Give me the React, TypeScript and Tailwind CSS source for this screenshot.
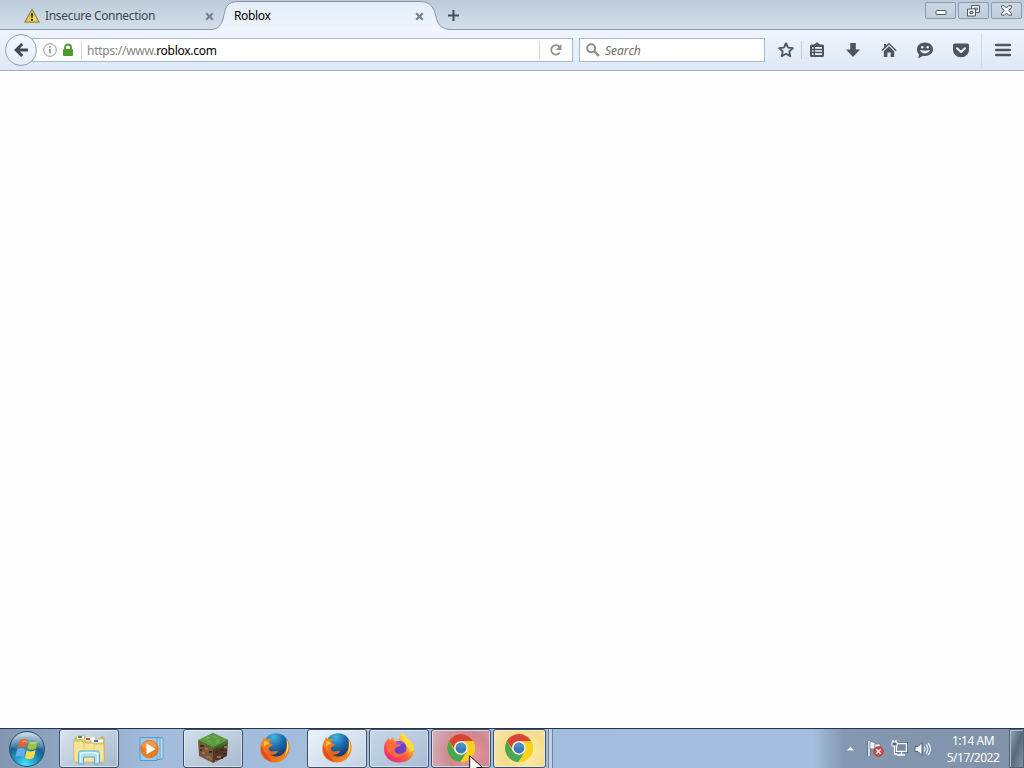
import type { ReactNode } from 'react'
import clsx from 'clsx'

function WarningIcon() {
  return (
    <svg width="16" height="16" viewBox="0 0 16 16" className="shrink-0">
      <path d="M8 1.2 15.2 14.3H.8z" fill="#e9c93a" stroke="#8b8450" strokeWidth="1.1" strokeLinejoin="round" />
      <path d="M8 3.5 12.9 12.8H8z" fill="#f6e27a" opacity=".6" />
      <path d="M7 5.2h2l-.4 4.8H7.4z" fill="#222" />
      <circle cx="8" cy="11.8" r="1.1" fill="#222" />
    </svg>
  )
}

function CloseIcon() {
  return (
    <svg width="9" height="9" viewBox="0 0 9 9" className="shrink-0">
      <path d="M1.2 1.2 7.8 7.8M7.8 1.2 1.2 7.8" stroke="#74808b" strokeWidth="2.2" />
    </svg>
  )
}

function CaptionButton({ children }: { children: ReactNode }) {
  return (
    <button className="flex h-[17px] w-[31px] items-center justify-center rounded-[2px] border border-[#8b9bac] bg-linear-to-b from-[#cad7e3] to-[#bfcedc]">
      {children}
    </button>
  )
}

function TabStrip() {
  return (
    <div className="flex h-[30px] bg-linear-to-b from-[#bdcbd9] to-[#d4e0ec] shadow-[inset_0_-1px_0_#8a9bb0]">
      <div className="flex h-8 w-[211px] shrink-0 items-center pl-6 text-[#3d454e]">
        <WarningIcon />
        <span className="ml-[5px] w-[160px] shrink-0 tracking-[-0.32px]">Insecure Connection</span>
        <CloseIcon />
      </div>
      <div className="relative flex h-[30px] w-[240px] shrink-0 items-center">
        <svg width="242" height="30" viewBox="0 0 242 30" className="absolute top-0 left-0">
          <defs>
            <linearGradient id="tab" x1="0" y1="0" x2="0" y2="1">
              <stop offset="0" stopColor="#e3edf9" />
              <stop offset="1" stopColor="#f0f5fe" />
            </linearGradient>
          </defs>
          <path
            d="M0 29.5C8 29 10.5 25 12.500 17C14.500 8 15.500 1.500 27 1.500H209C220 1.500 223 8 225 17C227 25 230 29 240 29.500V30H0z"
            fill="url(#tab)"
          />
          <path
            d="M0 29.500C8 29 10.500 25 12.500 17C14.500 8 15.500 1.500 27 1.500H209C220 1.500 223 8 225 17C227 25 230 29 240 29.500h2"
            fill="none"
            stroke="#8796a9"
          />
        </svg>
        <span className="relative ml-[23px] w-[181px] pt-[2px] tracking-[-0.35px] text-black">Roblox</span>
        <span className="relative pt-[2px]"><CloseIcon /></span>
      </div>
      <svg width="11" height="11" viewBox="0 0 11 11" className="mt-[10px] -ml-[3px]">
        <path d="M5.5 0v11M0 5.5h11" stroke="#424c57" strokeWidth="2" />
      </svg>
      <div className="ml-auto flex gap-[2px] pt-[2px] pr-[2px]">
        <CaptionButton>
          <svg width="12" height="7" viewBox="0 0 12 7" className="mt-[3px]">
            <rect x="1" y="1.5" width="10" height="4" rx=".8" fill="#f5f8fb" stroke="#535869" />
          </svg>
        </CaptionButton>
        <CaptionButton>
          <svg width="13" height="12" viewBox="0 0 13 12">
            <path d="M4.5.5h8v7h-8z" fill="#f5f8fb" stroke="#535869" />
            <path d="M7 3h3.5v2H7z" fill="#c4d2df" stroke="#535869" strokeWidth=".8" />
            <path d="M.5 4h8v7h-8z" fill="#f5f8fb" stroke="#535869" />
            <path d="M3 6.5h3v2H3z" fill="#c4d2df" stroke="#535869" />
          </svg>
        </CaptionButton>
        <CaptionButton>
          <svg width="13" height="11" viewBox="0 0 13 11">
            <path
              d="M1.500.8h3L6.500 3l2-2.200h3v1.600l-2.700 3.100 2.700 3.100v1.600h-3L6.500 8l-2 2.200h-3V8.600l2.700-3.100-2.700-3.100z"
              fill="#f5f8fb"
              stroke="#535869"
            />
          </svg>
        </CaptionButton>
      </div>
    </div>
  )
}

function ToolbarIcons() {
  return (
    <div className="flex h-full items-center text-[#4c5663]">
      <svg width="18" height="18" viewBox="0 0 18 18" className="ml-[12px]">
        <path
          d="m9 2.2 2 4.5 4.9.5-3.7 3.3 1.1 4.8L9 12.8l-4.3 2.5 1.1-4.8-3.7-3.3 4.9-.5z"
          fill="none"
          stroke="currentColor"
          strokeWidth="1.8"
          strokeLinejoin="round"
        />
      </svg>
      <div className="ml-[6px] h-[18px] w-px bg-[#c0ccdb]" />
      <svg width="16" height="16" viewBox="0 0 16 16" className="ml-[7px]">
        <path
          d="M5 2.5 8 .3l3 2.2h2.500A1.500 1.500 0 0 1 15 4v9.500a1.500 1.500 0 0 1-1.500 1.500h-11A1.500 1.500 0 0 1 1 13.500V4a1.500 1.500 0 0 1 1.500-1.500z"
          fill="currentColor"
        />
        <path d="M3 5.800h1.500M6 5.800h7M3 9h1.500M6 9h7M3 12.200h1.500M6 12.200h7" stroke="#edf4fc" strokeWidth="1.700" />
      </svg>
      <svg width="16" height="16" viewBox="0 0 16 16" className="ml-[20px]">
        <path d="M5.200 1h5.600v6.500H15L8 15 1 7.500h4.200z" fill="currentColor" />
      </svg>
      <svg width="16" height="16" viewBox="0 0 16 16" className="ml-[20px]">
        <path d="M8 .8l7.700 7.500-1 1L8 2.800 1.300 9.300l-1-1L3 5.700V2h2v1.800z" fill="currentColor" />
        <path d="m8 4.300 5.200 5V15H9.600v-4.500H6.400V15H2.800V9.300z" fill="currentColor" />
      </svg>
      <svg width="18" height="17" viewBox="0 0 18 17" className="ml-[19px]">
        <path
          d="M9 .5c4.600 0 8 2.900 8 6.800S13.600 14 9 14c-.9 0-1.700-.1-2.400-.3C5.400 15 3.700 15.900 1.800 16c.9-1 1.200-2.200 1.100-3.700C1.700 11.100 1 9.500 1 7.300 1 3.400 4.400.5 9 .5z"
          fill="currentColor"
        />
        <circle cx="6.300" cy="5.300" r="1.200" fill="#edf4fc" />
        <circle cx="11.700" cy="5.300" r="1.200" fill="#edf4fc" />
        <path d="M3.900 7.800c2.500 1.200 7.700 1.200 10.200 0-.8 2.500-2.700 3.700-5.100 3.700s-4.300-1.200-5.100-3.700z" fill="#edf4fc" />
      </svg>
      <svg width="16" height="15" viewBox="0 0 16 15" className="ml-[19px]">
        <path d="M1.500.5h13A1.500 1.500 0 0 1 16 2v4.800c0 4.300-3.500 7.500-8 7.500s-8-3.200-8-7.500V2A1.500 1.500 0 0 1 1.500.5z" fill="currentColor" />
        <path d="M4 5.200 8 9l4-3.800" stroke="#edf4fc" strokeWidth="2" fill="none" strokeLinecap="round" strokeLinejoin="round" />
      </svg>
      <div className="ml-[12px] h-[34px] w-px bg-[#cdd8e5]" />
      <svg width="16" height="14" viewBox="0 0 16 14" className="ml-[13px]">
        <path d="M1.200 2h13.600M1.200 7h13.600M1.200 12h13.600" stroke="currentColor" strokeWidth="2.600" strokeLinecap="round" />
      </svg>
    </div>
  )
}

function Toolbar() {
  return (
    <div className="flex h-[41px] items-center border-b border-[#a0b1c6] bg-linear-to-b from-[#f0f5fe] to-[#dce8f4]">
      <div className="z-10 ml-[5px] flex size-8 items-center justify-center rounded-full border border-[#8da1ba] bg-linear-to-b from-[#f4f8fe] to-[#e3edf8]">
        <svg width="16" height="16" viewBox="0 0 16 16">
          <path d="M9.200 2 3.200 8l6 6M3.500 8H15" fill="none" stroke="#424c57" strokeWidth="3" />
        </svg>
      </div>
      <div className="-ml-[5px] flex h-6 w-[541px] items-center border border-[#a9b8ce] bg-white pl-[9px]">
        <svg width="16" height="16" viewBox="0 0 16 16">
          <circle cx="8" cy="8" r="6.300" fill="none" stroke="#929292" />
          <path d="M8 7v4.500" stroke="#808080" strokeWidth="1.500" />
          <circle cx="8" cy="4.900" r=".9" fill="#808080" />
        </svg>
        <svg width="12" height="14" viewBox="0 0 12 14" className="ml-[4px]">
          <path d="M3 7V4.500a3 3 0 0 1 6 0V7" fill="none" stroke="#4c9a2b" strokeWidth="1.800" />
          <rect x="1" y="6" width="10" height="7" rx="1" fill="#4c9a2b" />
        </svg>
        <div className="ml-[7px] h-[18px] w-px bg-[#d2d6dc]" />
        <div className="ml-[5px] pt-px tracking-[-0.27px] text-[#858585]">
          https://www.<span className="text-black">roblox.com</span>
        </div>
        <div className="ml-auto h-[18px] w-px bg-[#d2d6dc]" />
        <svg width="14" height="14" viewBox="0 0 14 14" className="mr-[9px] ml-[9px]">
          <path d="M10.800 9.500A4.700 4.700 0 1 1 10.600 4" fill="none" stroke="#929292" strokeWidth="1.800" />
          <path d="M12.500 1v6H6.800z" fill="#929292" />
        </svg>
      </div>
      <div className="ml-[6px] flex h-6 w-[186px] items-center border border-[#a9b8ce] bg-white pl-[6px]">
        <svg width="14" height="14" viewBox="0 0 14 14">
          <circle cx="5.200" cy="5.200" r="4" fill="none" stroke="#8b8b8b" strokeWidth="1.900" />
          <path d="m8 8 5 4.800" stroke="#8b8b8b" strokeWidth="2.300" />
        </svg>
        <span className="ml-[5px] pt-px text-[#6c6c6c] italic">Search</span>
      </div>
      <ToolbarIcons />
    </div>
  )
}

function StartOrb() {
  return (
    <svg width="38" height="38" viewBox="0 0 38 38">
      <defs>
        <radialGradient id="orb" cx=".45" cy=".95" r=".9">
          <stop offset="0" stopColor="#4be6f8" />
          <stop offset=".35" stopColor="#1c9cc6" />
          <stop offset=".65" stopColor="#1b5f8e" />
          <stop offset="1" stopColor="#89a9c2" />
        </radialGradient>
        <linearGradient id="gloss" x1="0" y1="0" x2="0" y2="1">
          <stop offset="0" stopColor="#dfe9ef" stopOpacity=".85" />
          <stop offset="1" stopColor="#6f9cba" stopOpacity=".2" />
        </linearGradient>
      </defs>
      <circle cx="19" cy="19" r="17.500" fill="url(#orb)" stroke="#2a5375" />
      <path d="M3 17C3 8 10 2.500 19 2.500S35 8 35 17c-10 4-22 4-32 0z" fill="url(#gloss)" />
      <path d="M11.500 10.500c3-2 5.500-2 8.300-.2l-1.900 7.700c-2.700-1.800-5.500-1.500-8.300 0z" fill="#e4622e" />
      <path d="M21 11c3 1.700 5.800 1.400 9-.2l-2 7.700c-3 1.700-6 1.500-8.900 0z" fill="#93c53f" />
      <path d="M9.200 19.300c2.800-1.600 5.500-1.600 8.300.2l-1.900 7.700c-2.700-1.800-5.500-1.600-8.300-.1z" fill="#66aee3" />
      <path d="M18.800 20.200c3 1.700 5.800 1.500 8.900-.1l-1.900 7.700c-3 1.700-6 1.500-8.900 0z" fill="#fcd84a" />
      <path d="M14 12c2-1 4-.5 5 .5M22 13c2 .5 4 .4 6-.5" stroke="#fff" strokeWidth="1.500" opacity=".35" fill="none" />
    </svg>
  )
}

function ExplorerIcon() {
  return (
    <svg width="34" height="32" viewBox="0 0 34 32">
      <path d="M3 5h2V3h8v3h16V4h3v23H3z" fill="#dfc76f" stroke="#bda252" strokeWidth=".8" />
      <path d="M5 3h7v3H5z" fill="#fff" />
      <path d="M6 3h4v2H6z" fill="#4e9c3c" />
      <path d="M13 4.500h10v3H13z" fill="#fff" />
      <path d="M14 5h4v2h-4z" fill="#d44b2a" />
      <path d="M20 6.500h11v3H20z" fill="#fff" />
      <path d="M22 7h4v2h-4z" fill="#3474b8" />
      <path d="M1.500 8H10l2 2h8l2 1h10v18H2z" fill="#f4e695" stroke="#cbb466" strokeWidth=".8" />
      <path d="M12 10v17M22 11v16" stroke="#e3cf79" />
      <path d="M6.500 31V20.500c0-1.500.5-2.500 2-2.500h17c1.500 0 2 1 2 2.500V31h-5v-7h-11v7z" fill="#b1e0f4" stroke="#5fa9d0" />
      <path d="M8.500 29v-8.500c3-1.500 14-1.500 17 0V29" fill="none" stroke="#e8faff" strokeWidth="1.200" />
    </svg>
  )
}

function MediaPlayerIcon() {
  return (
    <svg width="28" height="26" viewBox="0 0 28 26">
      <path d="M10 2h14v21H10z" fill="#bbddef" stroke="#669fc9" />
      <path d="M6 1.500h15v22H6z" fill="#afd6ed" stroke="#5798c6" />
      <path d="M1 1.500h17v23H1z" fill="#9bcbea" stroke="#579ac9" />
      <circle cx="10.500" cy="13" r="8.700" fill="#ed7d21" stroke="#d8762c" />
      <path d="M3 10a8 8 0 0 1 15 0c-4 3-10 4-15 0z" fill="#f8ae66" opacity=".6" />
      <path d="M7.500 7.500v11l9-5.500z" fill="#fff" />
    </svg>
  )
}

// pixel clusters on the two dirt faces
const dirt = [
  [3, 13, 4], [8, 16, 3], [5, 20, 3], [12, 19, 3], [9, 24, 4], [13, 26, 2], [3, 17, 2],
  [18, 19, 3], [23, 17, 4], [27, 14, 3], [20, 24, 4], [26, 21, 3], [18, 28, 2], [24, 25, 2],
]

function GrassBlockIcon() {
  return (
    <svg width="32" height="32" viewBox="0 0 32 32">
      <path d="m1 8 15 7v16L2 24z" fill="#7d5539" />
      <path d="m31 8-15 7v16l14-7z" fill="#553725" />
      {dirt.map(([x, y, w]) => (
        <path key={`${x}-${y}`} d={`M${x} ${y}h${w}v2h-${w}z`} fill={y % 2 ? '#3f2a1e' : '#9a7152'} />
      ))}
      <path d="M16 1 31 8v4l-2 1v-1l-3 2v-1l-3 3v-2l-3 2v-1l-4 3-3-3v1l-4-3v1l-3-3v1l-4-2V8z" fill="#43712d" />
      <path d="M16 1 31 8l-15 7L1 8z" fill="#5f9a40" />
      <path d="m10 5 3 1m3-2 4 2m-10 3 4 1m5-1 4-1m-15-1 3-1m8 5 3-1" stroke="#78b452" strokeWidth="1.200" />
    </svg>
  )
}

function FirefoxIcon() {
  return (
    <svg width="32" height="32" viewBox="0 0 32 32">
      <defs>
        <radialGradient id="globe" cx=".4" cy=".15" r=".8">
          <stop offset="0" stopColor="#45b5df" />
          <stop offset=".5" stopColor="#1a6bab" />
          <stop offset="1" stopColor="#16346d" />
        </radialGradient>
        <linearGradient id="fox" x1="0" y1="0" x2="1" y2="1">
          <stop offset="0" stopColor="#f49b1e" />
          <stop offset=".5" stopColor="#e9601b" />
          <stop offset="1" stopColor="#f39a1f" />
        </linearGradient>
      </defs>
      <circle cx="17" cy="14" r="12.700" fill="url(#globe)" />
      <path
        d="M28 7.500c3 4 3.300 9 1.500 13.500C27 27 22 30.500 16 30.500 8 30.500 1.300 25 1.300 17c0-4 1-7 2.700-9.500L5 4.500l1.500 3c2-1 4.500-1 6 0-2 1-2.200 2-2 3.500l3.500 1.500c-.3 1.500-3 2-4 3.500-.5 2 1 3.500 3 3.500s4-1 6 0c-1 2.500-4.500 3.500-7.500 3 4 3 9.500 2.500 12.500-.5 3.500-3.500 5-8.500 4-14.500z"
        fill="url(#fox)"
      />
      <path d="M27.500 7c3.500 6 2.300 12-1.500 17 2-6 2.200-11 1.500-17z" fill="#fce04d" />
      <path d="M2.300 13c-1.800 7 3.700 15 11.700 17C9 26 5 21 2.300 13z" fill="#dd4b1b" />
      <path d="M5 9c3 0 4.500 1 5.500 3-2.500 0-4.500 1-5.500 3.500z" fill="#f9bd3d" />
    </svg>
  )
}

function FirefoxNewIcon() {
  return (
    <svg width="32" height="32" viewBox="0 0 32 32">
      <defs>
        <linearGradient id="flame" x1=".85" y1=".1" x2=".2" y2=".9">
          <stop offset="0" stopColor="#fff04a" />
          <stop offset=".35" stopColor="#ffa526" />
          <stop offset=".65" stopColor="#ff553d" />
          <stop offset="1" stopColor="#f02b75" />
        </linearGradient>
      </defs>
      <path
        d="M19 1c4 2 5 5 6 7l1-1c4 4 5 8 5 11 0 7.500-6 12.500-15 12.500C7 30.500 1 25 1 17c0-4 1-7 3-9l1-2 2 2 3-3 1.500 3.500c2 0 3.500.5 4.500 1.500 0-4 .500-6 3-9z"
        fill="url(#flame)"
      />
      <path d="M19 1c4 2 5 5 6 7l1-1c4 4 5 8 5 11l-5 3c2-7-7-7-7-20z" fill="#fedb3b" />
      <circle cx="16.500" cy="16" r="7" fill="#6a41c9" />
      <path d="M3 11c3-3 8-3 11 .5 1.500.5 3.500.5 4.500 1.500-1.500 2-5 1.500-6.500 3.500-1 2 0 4 2 5 3 1 6.500 0 8.500-2.500-.500 5.500-7 8-12.500 5C5 21.500 3 17 3 11z" fill="#ff6a3d" />
      <path d="M13 11c2-2 7-2 9 1-2-1-5 0-7 1z" fill="#9059ff" />
    </svg>
  )
}

function ChromeIcon() {
  return (
    <svg width="30" height="30" viewBox="0 0 30 30">
      <circle cx="15" cy="15" r="14" fill="#f8cb1c" />
      <path d="M2.900 8A14 14 0 0 1 27.100 8H15c-4 0-7 3-7 7z" fill="#d64338" />
      <path d="M2.900 8A14 14 0 0 0 14.500 29l6.600-10.500C17 23 11 22 9 18.500z" fill="#4aa554" />
      <path d="M15 8h12.100A14 14 0 0 1 14.500 29L21 18.500c2-4 0-10-6-10.500z" fill="#fcd01b" />
      <circle cx="15" cy="15" r="6.800" fill="#f3f6f7" />
      <circle cx="15" cy="15" r="5.400" fill="#3879b9" />
      <path d="M10 14a5.200 5.200 0 0 1 10 0c-3 1-7 1-10 0z" fill="#62a2d6" opacity=".5" />
    </svg>
  )
}

function TaskButton({ className, children }: { className: string; children: ReactNode }) {
  return (
    <div
      className={clsx(
        'flex h-[39px] shrink-0 items-center justify-center rounded-[3px] border border-[#3f5066] shadow-[inset_0_0_0_1px_#e7f0f8b0]',
        className,
      )}
    >
      {children}
    </div>
  )
}

function Tray() {
  return (
    <div className="ml-auto flex h-full w-[212px] items-center bg-linear-to-r from-[#a5c0df] via-[#8498b1] via-15% to-[#8092a9] text-white">
      <svg width="9" height="5" viewBox="0 0 9 5" className="ml-[34px]">
        <path d="M4.500.3 8.700 4.700H.3z" fill="#f4f8fb" stroke="#64768d" strokeWidth=".4" />
      </svg>
      <svg width="17" height="17" viewBox="0 0 17 17" className="ml-[12px]">
        <path d="M2 1v15" stroke="#45566d" strokeWidth="3" />
        <path d="M2 1v15" stroke="#fff" strokeWidth="1.600" />
        <path d="M3 2c3-1 3 1 5 .5V9c-2 .5-3-1-5 0z" fill="#f3f7fa" stroke="#5b6c82" strokeWidth=".6" />
        <path d="M8 4h5v5H8z" fill="#f3f7fa" stroke="#5b6c82" strokeWidth=".6" />
        <circle cx="11.500" cy="11.500" r="4.900" fill="#d44a43" stroke="#a6303b" strokeWidth=".6" />
        <path d="m9.300 9.300 4.400 4.400m0-4.400-4.400 4.400" stroke="#fff" strokeWidth="1.500" />
      </svg>
      <svg width="17" height="17" viewBox="0 0 17 17" className="ml-[7px]">
        <path d="M5.500 3.500h10v8h-10z" fill="#697b92" stroke="#43536a" strokeWidth="3" />
        <path d="M5.500 3.500h10v8h-10zM10.500 11.500v3M6 15h8" fill="#7789a0" stroke="#fff" strokeWidth="1.400" />
        <path d="M1 2h5v4H1z" fill="#54657d" stroke="#fff" />
        <path d="M2 0v2m3-2v2M3.500 6v8H6" fill="none" stroke="#fff" strokeWidth="1.300" />
      </svg>
      <svg width="17" height="16" viewBox="0 0 17 16" className="ml-[6px]">
        <path d="M1 5.500h3l4-4v13l-4-4H1z" fill="#f5f8fb" stroke="#50617a" />
        <path
          d="M10 5.500c1.300 1.500 1.300 3.500 0 5M12 3.500c2.500 2.500 2.500 6.500 0 9M14 2c3.300 3.500 3.300 8.500 0 12"
          fill="none"
          stroke="#eff5f9"
          strokeWidth="1.100"
        />
      </svg>
      <div className="ml-[11px] w-[62px] text-center leading-[17px] tracking-[-0.48px]">
        <div>1:14 AM</div>
        <div>5/17/2022</div>
      </div>
      <div className="ml-auto h-full w-[15px] border border-[#52647a] bg-linear-to-br from-[#9aa8b9] via-[#59697e] to-[#8292a7] shadow-[inset_1px_1px_0_#b0bdcb]" />
    </div>
  )
}

function Taskbar() {
  return (
    <div className="relative flex h-10 border-t border-[#263448] bg-linear-to-r from-[#8296b2] via-[#a2bcdc] via-15% to-[#a5c0df]">
      <div className="flex w-[59px] items-center pl-[8px]"><StartOrb /></div>
      <TaskButton className="w-[60px] bg-linear-to-br from-[#d9e4ee] to-[#a7b9ce]"><ExplorerIcon /></TaskButton>
      <div className="flex w-[64px] items-center justify-center pl-[3px]"><MediaPlayerIcon /></div>
      <TaskButton className="w-[60px] bg-linear-to-br from-[#d2deea] to-[#a9bad0] pb-[2px]"><GrassBlockIcon /></TaskButton>
      <div className="flex w-[64px] items-center justify-center pb-[2px]"><FirefoxIcon /></div>
      <TaskButton className="w-[60px] bg-linear-to-br from-[#edf4fa] to-[#c3d2e4] pb-[2px]"><FirefoxIcon /></TaskButton>
      <TaskButton className="ml-[2px] w-[60px] bg-linear-to-br from-[#c8d7e7] to-[#a9bdd5] pb-px"><FirefoxNewIcon /></TaskButton>
      <TaskButton className="ml-[2px] w-[60px] bg-[radial-gradient(circle_at_65%_65%,#ea969e,#cf8791_45%,#d6b4be)] pb-[2px]"><ChromeIcon /></TaskButton>
      <TaskButton className="ml-[2px] w-[53px] bg-[radial-gradient(circle_at_60%_60%,#fff3ae,#f4dc8c_55%,#f8e9b1)] pr-[2px] pb-[2px]"><ChromeIcon /></TaskButton>
      <div className="ml-[2px] w-[5px] border-x border-[#71869f] bg-[#c1d1e3]" />
      <Tray />
      <svg width="14" height="20" viewBox="0 0 14 20" className="absolute top-[26px] left-[469px]">
        <path d="M.7.7v16l4-3.600 3 7h3l-3-7.600h5.800z" fill="#fff" stroke="#111" />
      </svg>
    </div>
  )
}

export default function App() {
  return (
    <div className="flex h-[768px] w-[1024px] flex-col overflow-hidden bg-[#fefefe] font-['Noto_Sans','Open_Sans',sans-serif] text-[12px] leading-4">
      <TabStrip />
      <Toolbar />
      <main className="flex-1" />
      <Taskbar />
    </div>
  )
}
